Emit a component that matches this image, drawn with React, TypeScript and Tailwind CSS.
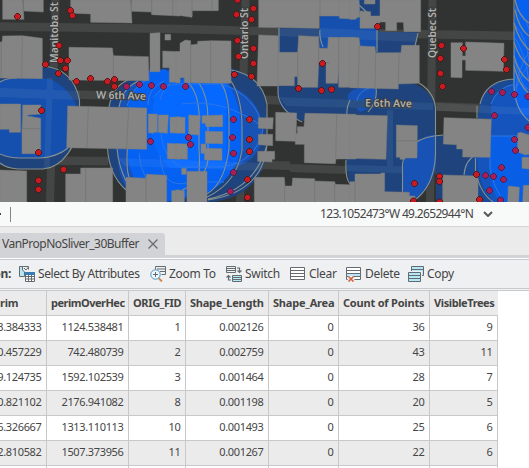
import type { ReactNode } from 'react';

type Tile = { x: number; y: number; shapes: string[]; seams?: string };

// Building footprints, three units per map pixel inside each tile.
const tiles: Tile[] = [
  {
    x: 0, y: 0,
    shapes: [
      '8,0 68,0 72,58 8,58', '70,0 130,0 130,36 71,33',
      '212,0 392,0 396,69 272,67 272,42 220,40 212,40', '394,0 540,0 540,48 455,44 455,36 394,34',
      '0,126 6,126 8,108 68,107 127,115 127,236 0,234', '207,142 337,144 340,167 445,170 447,242 207,240',
      '450,100 480,98 480,215 450,215', '488,153 540,155 540,247 508,247 508,203 488,203', '495,103 512,103 512,120 495,120',
    ],
    seams: 'M70 0V58M394 0V36M455 0V42M518 0V46M67 108L65 234M4 126V234M340 167V241',
  },
  {
    x: 176, y: 0,
    shapes: [
      '0,0 127,0 127,32 48,32 48,52 0,45', '248,0 540,0 540,48 430,48 430,85 248,82', '490,0 540,0 540,58 490,55',
      '0,155 12,155 12,130 28,120 44,122 44,135 65,132 65,124 105,122 165,123 165,250 25,248 25,233 12,233 12,248 0,248',
      '248,105 307,107 307,258 243,258',
      '305,157 365,157 368,107 428,110 430,145 455,145 457,112 540,112 540,262 488,262 488,195 485,250 450,250 450,190 428,190 425,262 365,262 365,230 355,230 355,257 305,257',
    ],
    seams: 'M48 0V48M108 0V32M432 0V48M44 135V248M104 122V248M428 110V190M488 112V200M365 157V230M450 188H462',
  },
  {
    x: 350, y: 0,
    shapes: [
      '0,0 27,0 30,50 10,58 0,58', '43,0 75,0 75,12 43,12',
      '90,0 212,0 212,95 162,95 160,67 140,67 140,92 107,92 107,66 90,66 78,85 30,85 30,33 62,35 62,48 90,48',
      '0,113 27,113 30,138 75,140 77,158 153,158 155,136 208,136 208,250 145,252 145,267 0,263',
      '303,128 337,128 337,168 347,168 347,126 462,130 460,214 347,211 347,180 336,180 336,233 303,232',
    ],
    seams: 'M28 138L24 264M77 158L75 265M147 158L145 252',
  },
  {
    x: 0, y: 100,
    shapes: [
      '0,12 62,12 62,97 28,97 28,88 0,88', '68,15 122,15 122,42 82,45 82,48 122,55 122,161 66,161 66,88 68,50',
      '203,18 440,24 440,148 200,143', '445,42 472,42 472,97 460,97 460,100 445,98', '475,45 505,45 502,100 475,97',
      '510,52 540,50 540,100 510,98', '502,130 540,132 540,178 502,176', '0,210 80,213 80,310 0,310',
      '197,222 242,222 242,204 338,204 338,310 197,310', '378,232 437,235 440,223 500,226 500,310 378,310', '515,272 540,270 540,310 515,310',
    ],
    seams: 'M265 20L261 144M386 22L380 146M257 205V310M438 232V310M68 86H122',
  },
  {
    x: 176, y: 100,
    shapes: [
      '0,52 27,52 27,100 0,98', '38,45 73,47 70,105 38,103', '78,47 140,45 140,80 90,80 88,70 78,70', '88,94 140,95 140,131 88,130',
      '0,131 34,132 34,178 0,176', '75,132 90,132 90,145 138,146 138,181 86,180 85,160 75,160', '17,205 31,205 31,223 17,223',
      '33,214 93,214 93,306 33,306', '0,270 25,272 25,310 0,310', '247,53 292,53 290,87 247,85', '247,103 290,103 290,137 247,134',
      '245,154 296,154 296,178 288,178 288,186 245,184',
      '299,37 362,39 360,124 299,122', '364,80 384,80 387,40 540,43 540,177 480,177 478,191 385,188 385,133 358,133 358,103 364,100',
      '235,232 325,232 327,258 348,258 350,234 416,236 416,243 476,245 478,253 540,255 540,310 235,310',
    ],
    seams: 'M482 43L479 178M326 258V310M416 240V310M476 250V310',
  },
  {
    x: 350, y: 100,
    shapes: [
      '0,45 112,47 108,178 0,175', '139,75 202,77 201,174 165,174 165,178 150,178 150,172 139,172',
      '282,53 424,58 420,172 338,171 338,147 320,147 320,134 280,132', '278,225 384,228 384,310 278,310',
      '0,245 15,245 15,222 93,222 93,219 104,219 104,275 178,277 178,288 195,288 195,310 0,310',
      '503,100 512,97 537,105 537,163 525,165 503,155', '516,172 537,172 537,207 516,205',
      '475,258 508,262 506,310 473,310', '520,256 537,256 537,310 518,310',
    ],
    seams: 'M139 122H202M15 245V310',
  },
];

const trees: [number, number][] = [
  [17.5, 16.5], [70.5, 10.5], [72.5, 15.5], [59, 45.5], [60.5, 60.5], [67.5, 60.5], [45.5, 64.5], [65.5, 68.5], [58.5, 73.5],
  [76.5, 81.5], [90.5, 78.5], [107.5, 81.5], [114.5, 79.5], [114.5, 86.5], [126.5, 86.5], [139.5, 84.5], [151.5, 85.5], [163.5, 86.5],
  [237.5, 0], [253.5, 8.5], [236.5, 14.5], [251.5, 19.5], [237.5, 40.5], [253.5, 48.5], [238.5, 56.5], [253.5, 63.5], [234.5, 74.5],
  [251.5, 76.5], [185.5, 86.5], [322.5, 63.5], [298.5, 88.5], [321.5, 90.5], [331.5, 89.5], [377.5, 26.5], [441.5, 45.5], [440.5, 58.5],
  [440.5, 73.5], [442.5, 86.5], [463.5, 48.5], [504.5, 59.5], [506.5, 69.5], [491.5, 91.5], [502.5, 92.5], [514.5, 94.5], [528, 96.5],
  [41.5, 110.5], [38.5, 152.5], [63.5, 169.5], [38.5, 180.5], [38.5, 189.5], [150.5, 141.5],
  [233.5, 119.5], [249.5, 119.5], [232.5, 137.5], [249.5, 139.5], [188.5, 137.5], [190.5, 144.5], [233.5, 153.5], [249.5, 151.5],
  [233.5, 172.5], [247.5, 179.5], [230.5, 191.5], [247.5, 197.5],
  [494.5, 115.5], [528, 127.5], [514.5, 139.5], [515.5, 150.5], [501.5, 167.5], [503.5, 179.5], [493.5, 176.5], [485.5, 175.5],
  [476.5, 174.5], [489.5, 190.5], [479.5, 199.5], [500.5, 200], [439.5, 176.5], [439.5, 181.5], [439.5, 202], [414.5, 183.5], [413.5, 201],
];

function StreetLabel({ x, y, angle, length, children }: { x: number; y: number; angle: number; length: number; children: string }) {
  return (
    <text
      transform={`translate(${x} ${y}) rotate(${angle})`}
      textLength={length}
      className="fill-[#b0b0ae] stroke-[#3a3c3c] stroke-2 [paint-order:stroke] text-[10.5px] font-semibold font-['Noto_Sans',sans-serif]"
    >
      {children}
    </text>
  );
}

function CityMap() {
  return (
    <svg viewBox="0 0 529 202" className="block h-[202px] w-[529px] shrink-0 bg-[#303332]">
      <g fill="none" stroke="#434645">
        <path strokeWidth="8.5" d="M0 26.5L180 29L300 32L529 36M0 92.5L270 100L529 110M0 160L180 162L350 168L529 171" />
        <path strokeWidth="8" d="M55.500 0L50 202M245.500 0L240 202M432.500 0L430 202" />
      </g>

      <path fill="#1f437c" d="M-5 66H42Q70 68 80 100V112C80 150 58 169 42 169H15Q5 168-5 162Z" />
      <path fill="#1550ae" d="M-5 83Q5 78 15 78H42Q62 79 76 104V130Q69 157 42 158H15Q5 158-5 152Z" />
      <path fill="#1f437c" d="M109 202V107C114 83 140 67 176 68H231C255 75 267 90 267 115V145C267 180 242 200 210 202Z" />
      <path fill="#303332" d="M108 152Q110 175 126 191V202H108Z" />
      <path fill="#1852b4" d="M119 107Q121 87 142 78L176 68L232 87Q262 99 263 132Q263 160 230 169L205 184L160 202L127 188Q118 177 117 150Z" />
      <path fill="#0561f2" d="M127 110Q133 82 149 77V70L157 71L164 69L170 72V80H183V78L228 83Q242 105 242 140Q240 174 208 193L165 202L140 188Q127 169 127 150Z" />
      <path fill="#0568ff" d="M154 100Q160 84 176 83H226V168H170Q151 150 151 122Z" />
      <path fill="#1f437c" d="M278 28H378L380 32H418L413 83Q434 91 436 112V164Q434 188 412 202H356Q347 181 346 160V132L310 123Q278 115 278 95Z" />
      <path fill="#303332" d="M296 122L302 122L337 122V133H346V158Q346 160 346 166H290V122Z" />
      <path fill="#434645" d="M290 164L346 166V174L290 172Z" />
      <path fill="#1550ae" d="M320 16H377V48H320ZM359 0H373V28H359Z" />
      <path fill="#1f437c" d="M360 0H380V16H360Z" />
      <path fill="#1852b4" d="M348 100V95Q350 90 358 88H376Q376 101 370 108L360 112Z" />
      <path fill="#285086" d="M279 97L433 103V110L286 106ZM347 165L434 167V175L347 171ZM387 110H393V170H387Z" />
      <path fill="#1f437c" d="M436 135H529V202H436Z" />
      <path fill="#1852b4" d="M436 135H431Q403 143 403 170V190L412 202Q434 184 436 164Z" />
      <path fill="#1b4a95" d="M480 104Q486 80 515 79L529 80V202H480Q463 190 464 170Q465 158 477 154V120Z" />
      <path fill="#1454bc" d="M491 108Q493 88 515 84L529 83V202H493Q477 184 477 154L490 150Z" />
      <path fill="#095ee6" d="M491 136H529V202H499Q486 181 491 154Z" />
      <path fill="#0861ee" d="M515 0H529V121Q515 113 513 89Z" />
      <path fill="#ffffff" opacity=".06" d="M0 88L80 91V100L0 97ZM47 78H53L50 169H44ZM118 158L263 163V171L124 166ZM278 29L320 28L418 33V42L278 36ZM437 103L529 108V115L437 111Z" />

      <g fill="none" stroke="#85908d" strokeWidth="1.1">
        <path d="M42 66Q73 68 79.500 100V112C80 148 60 168 43 169H18Q6 168 0 163M0 82Q6 78 17 78M0 154Q9 158 20 158H40Q57 157 68 148" />
        <path d="M109 107Q113 86 128 80M107.500 148Q109 175 126 190M119 107Q123 87 139 81M117 148Q118 164 126 181M127.500 146Q126 169 129 177" />
        <path d="M231 70Q261 75 267 104V145Q263 192 208 200M189 83Q198 94 199 112V150Q201 175 195 187M199 83Q208 96 208 119V146Q212 178 182 190M221 83Q229 95 229 120V148Q225 183 207 194M231 81Q242 98 242 127V150Q237 183 207 197M267 145Q255 190 208 199" />
        <path d="M279 28V53M278 86V94Q280 111 302 122M320 30Q319 37 323 47M350 100Q346 108 347 115M346 160Q345 178 350 184M418 33L415 46M419 83Q434 92 435.500 108V155Q434 188 412 202M402.500 202V164Q406 137 443 135M359 5L370 15M377 28V52M376 88Q378 101 368 112" />
        <path d="M480 104Q486 80 514 79V0M477 118V106M477 154Q465 160 464 175M475.500 158V171Q480 193 493 202M514 79Q513 108 529 121" />
      </g>
      <g fill="none" stroke="#2e76e5" strokeWidth="1">
        <path d="M127 106Q132 87 147 80M148 105Q148 88 164 81M160 100Q163 89 170 83M153 98Q163 84 177 84H222Q258 97 263 130Q256 162 222 167H182Q160 158 160 120M182 104Q224 98 263 127M160 155Q162 191 190 182H224M139 153Q140 180 162 193M357 101Q358 92 369 88M491 104Q497 87 515 84M491 136H529M490 136V168Q493 187 504 201" />
        <path d="M514 8Q524 13 529 29M514 24Q527 37 529 62M514 36Q526 55 529 82M514 57Q520 82 529 94M514 76Q521 83 529 90M529 52Q518 69 516 88M529 66Q516 78 515 99" />
      </g>
      <g fill="none" stroke="#7e8989" strokeWidth="1.3">
        <path d="M515 0Q519 17 529 23M515 10Q519 29 529 36M514 23Q519 41 529 50M514 42Q519 59 529 66M514 56Q519 74 529 81M514 66Q519 85 529 94" />
      </g>

      {tiles.map((tile) => (
        <g key={`${tile.x}-${tile.y}`} transform={`translate(${tile.x} ${tile.y}) scale(.3333333)`}>
          {tile.shapes.map((points) => (
            <polygon key={points} points={points} fill="#848484" stroke="#7c7d7d" strokeWidth="1.5" />
          ))}
          <path d={tile.seams} fill="none" stroke="#747575" strokeWidth="2.4" />
        </g>
      ))}

      <StreetLabel x={57.8} y={63} angle={-90} length={61}>Manitoba St</StreetLabel>
      <StreetLabel x={247.8} y={59} angle={-90} length={51}>Ontario St</StreetLabel>
      <StreetLabel x={435.8} y={58} angle={-90} length={50}>Quebec St</StreetLabel>
      <StreetLabel x={96} y={98.5} angle={1.5} length={50}>W 6th Ave</StreetLabel>
      <StreetLabel x={365} y={106.5} angle={1} length={47}>E 6th Ave</StreetLabel>

      {trees.map(([x, y]) => {
        const inBuffer = (x > 115 && x < 246 && y > 83) || (x > 484 && y > 85);
        return (
          <path
            key={`${x},${y}`}
            transform={`translate(${x} ${y})`}
            d="M-1-3H1L3-1V1L1 3H-1L-3 1V-1Z"
            fill={inBuffer ? '#a81d53' : '#c91a20'}
            stroke={inBuffer ? '#43204f' : '#4b1719'}
            strokeWidth="1"
            strokeLinejoin="round"
          />
        );
      })}
    </svg>
  );
}

function Icon({ children }: { children: ReactNode }) {
  return <svg viewBox="0 0 16 16" fill="none" stroke="#646b70" className="size-4 shrink-0">{children}</svg>;
}

const icons = {
  select: (
    <Icon>
      <path fill="#b5e8f7" d="M.5.5h3V4l2 2v4.500h-5Z" />
      <path d="M3.500.5h6v3M5 2l2 2 2.500-3" />
      <path fill="#fff" d="M6.500 6.500h9v9h-9Z" />
      <path fill="#2d80c5" stroke="#397caf" d="M6.500 6.500h9v2h-9Z" />
      <path d="M6.500 10.500h9M6.500 13h9M9.500 9v6.500M12.500 9v6.500" />
    </Icon>
  ),
  zoom: (
    <Icon>
      <path d="M5.500 3.500v-3h10v8h-4M7 3h8.500M10 5.500h5.500" />
      <path stroke="#d18a4f" strokeWidth="2" d="M8.500 12l3.500 3.500" />
      <circle cx="5.500" cy="8.500" r="4.700" fill="#eff8fc" stroke="#4793c6" />
      <path d="M3 8.500h5M5.500 6v5" />
    </Icon>
  ),
  switch: (
    <Icon>
      <path d="M.5.5h9v6h-9ZM.5 2.500h9M.5 4.500h9" />
      <path fill="#b5e8f7" d="M6.500 9.500h9v6h-9ZM6.500 11.500h9M6.500 13.500h9" />
      <path strokeWidth="1.200" d="M11 2h2.500v4M11.500 4.500l2 2 2-2M5 14H2.500v-4M.5 11.500l2-2 2 2" />
    </Icon>
  ),
  clear: (
    <Icon>
      <path fill="#fff" d="M.5 1.500h14v12h-14ZM.5 4.500h14M.5 7.500h14M.5 10.500h14" />
    </Icon>
  ),
  delete: (
    <Icon>
      <path fill="#fff" d="M.5 1.500h14v12h-14Z" />
      <path fill="#b5e8f7" d="M.5 7.500h14v3h-14Z" />
      <path d="M.5 4.500h14" />
      <path stroke="#eff0f2" strokeWidth="4" d="M2.500 10.500l5 5m0-5l-5 5" />
      <path stroke="#d8613c" strokeWidth="1.600" d="M2.500 10.500l5 5m0-5l-5 5" />
    </Icon>
  ),
  copy: (
    <Icon>
      <path fill="#b5e8f7" d="M3.500.5h12v9h-12ZM3.500 3.500h12" />
      <path fill="#b5e8f7" stroke="#eff0f2" strokeWidth="3" d="M.5 6.500h12v9h-12Z" />
      <path fill="#b5e8f7" d="M.5 6.500h12v9h-12ZM.5 9.500h12M.5 12.500h12" />
    </Icon>
  ),
};

function Tool({ icon, className, children }: { icon: ReactNode; className: string; children: string }) {
  return (
    <div className={`flex shrink-0 items-center gap-[3px] ${className}`}>
      {icon}
      <span>{children}</span>
    </div>
  );
}

const columns = [
  { name: 'rim', tracking: 'tracking-[-0.25px]' },
  { name: 'perimOverHec', tracking: 'tracking-[-0.5px]' },
  { name: 'ORIG_FID', tracking: 'tracking-[-0.35px]' },
  { name: 'Shape_Length', tracking: 'tracking-[-0.25px]' },
  { name: 'Shape_Area', tracking: 'tracking-[-0.2px]' },
  { name: 'Count of Points', tracking: 'tracking-[-0.2px]' },
  { name: 'VisibleTrees', tracking: 'tracking-[-0.4px]' },
];
const rows = [
  ['3.384333', '1124.538481', '1', '0.002126', '0', '36', '9'],
  ['0.457229', '742.480739', '2', '0.002759', '0', '43', '11'],
  ['9.124735', '1592.102539', '3', '0.001464', '0', '28', '7'],
  ['0.821102', '2176.941082', '8', '0.001198', '0', '20', '5'],
  ['6.326667', '1313.110113', '10', '0.001493', '0', '25', '6'],
  ['2.810582', '1507.373956', '11', '0.001267', '0', '22', '6'],
  ['', '', '', '', '', '', ''],
];
const grid = 'grid w-[498px] grid-cols-[47px_82px_57px_83px_70px_91px_68px] border-b border-[#c8c8c8]';

export default function App() {
  return (
    <div className="flex h-[468px] w-[529px] flex-col overflow-hidden bg-white font-['Noto_Sans',sans-serif] text-[#454545]">
      <CityMap />
      <div className="flex h-[25px] shrink-0 items-center border-b border-[#d5d5d6] bg-[#f8f9f9]">
        <div className="mb-px h-0.5 w-px bg-[#444]" />
        <div className="ml-[9px] h-[15px] w-px bg-[#858585]" />
        <div className="ml-[309px] w-[153px] whitespace-nowrap text-[12px] leading-4 tracking-[-0.67px]">123.1052473°W 49.2652944°N</div>
        <svg viewBox="0 0 10 6" className="ml-[10px] h-1.5 w-2.5" fill="none" stroke="#55585a" strokeWidth="2"><path d="M1 1l4 4 4-4" /></svg>
      </div>
      <div className="flex h-[31px] shrink-0 items-end border-b-[3px] border-[#d2d3d6] bg-[#ebebec]">
        <div className="flex h-[22px] w-[165px] items-center rounded-tr-[3px] bg-[#d2d3d6] pl-[2px]">
          <span className="w-[146px] whitespace-nowrap text-[12px] tracking-[-0.5px]">VanPropNoSliver_30Buffer</span>
          <svg viewBox="0 0 10 10" className="size-2.5" fill="none" stroke="#6c6f72" strokeWidth="1.4"><path d="M.5.5l9 9m0-9l-9 9" /></svg>
        </div>
      </div>
      <div className="mt-px flex h-[30px] shrink-0 items-center overflow-hidden whitespace-nowrap border-y border-[#c8c9cb] bg-[#eff0f2] text-[12px] tracking-[-0.3px]">
        <div className="flex w-[11px] shrink-0 justify-end font-bold">on:</div>
        <Tool icon={icons.select} className="ml-2 w-[131px] tracking-[-0.4px]">Select By Attributes</Tool>
        <Tool icon={icons.zoom} className="w-[76px]">Zoom To</Tool>
        <Tool icon={icons.switch} className="w-[64px]">Switch</Tool>
        <Tool icon={icons.clear} className="w-[56px]">Clear</Tool>
        <Tool icon={icons.delete} className="w-[62px]">Delete</Tool>
        <Tool icon={icons.copy} className="w-[54px]">Copy</Tool>
      </div>
      <div className="h-px shrink-0 bg-[#f2f3f4]" />
      <div className="h-px shrink-0 bg-[#c8c9cb]" />
      <div className={`${grid} h-[25px] shrink-0 bg-[#ebebeb]`}>
        {columns.map(({ name, tracking }) => (
          <div key={name} className={`flex items-center border-r border-[#c8c8c8] pl-[4px] text-[11px] font-bold whitespace-nowrap first:pl-0 last:border-[#ebebeb] ${tracking}`}>
            {name}
          </div>
        ))}
      </div>
      {rows.map((row, rowIndex) => (
        <div key={rowIndex} className={`${grid} h-[25px] shrink-0 ${rowIndex % 2 ? 'bg-[#ebebeb]' : 'bg-white'}`}>
          {row.map((value, columnIndex) => (
            <div key={columnIndex} className="flex items-center justify-end border-r border-[#c8c8c8] pr-[4.5px] pb-px text-[11px] tracking-[-0.35px]">
              {value}
            </div>
          ))}
        </div>
      ))}
    </div>
  );
}
